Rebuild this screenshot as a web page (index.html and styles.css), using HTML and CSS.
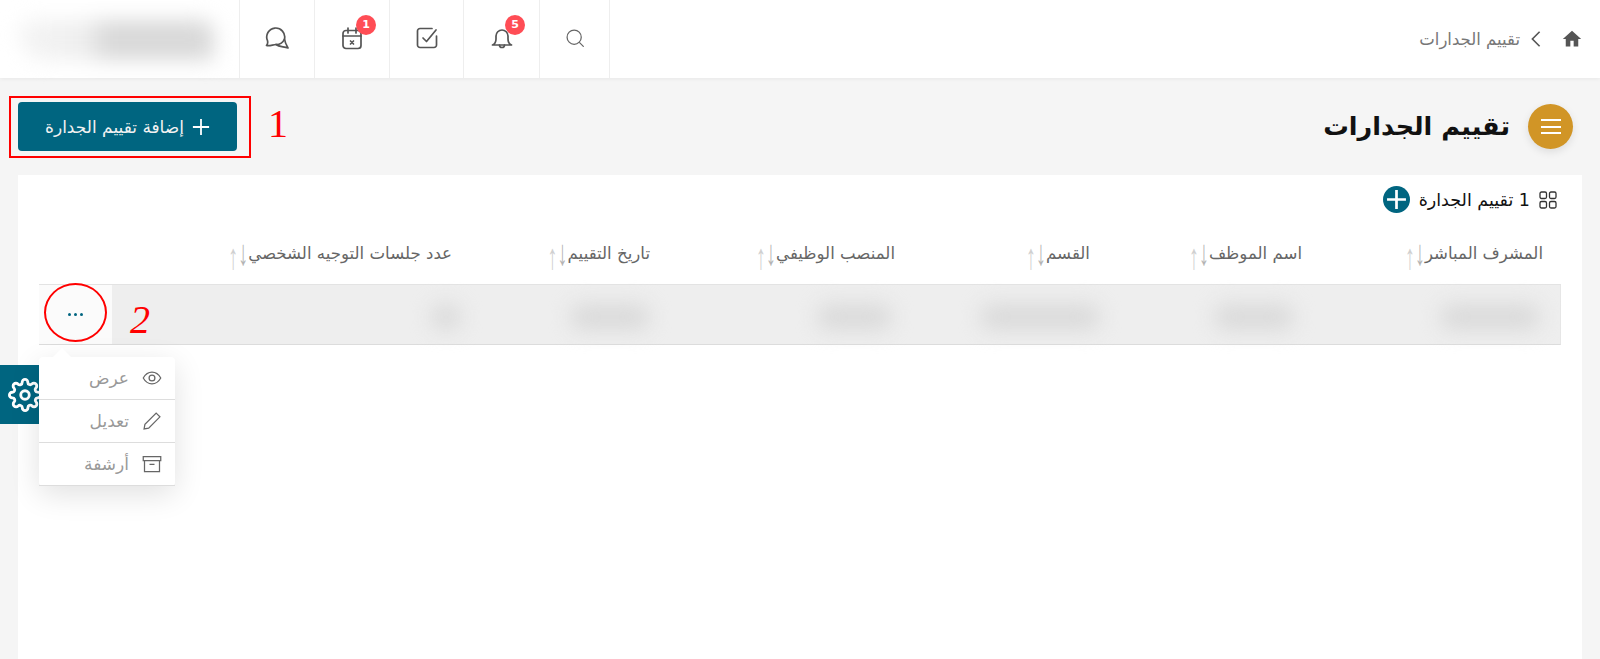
FILE: index.html
```html
<!DOCTYPE html>
<html lang="ar" dir="rtl">
<head>
  <meta charset="UTF-8">
  <meta name="viewport" content="width=device-width, initial-scale=1.0">
  <title>تقييم الجدارات</title>
  <link rel="stylesheet" href="styles.css">
</head>
<body>
  <header class="topbar">
    <nav class="crumbs">
      <svg class="home-icon" viewBox="0 0 24 24"><path d="M10 21v-7h4v7h5.500v-9H23L12 2 1 12h3.500v9z"/></svg>
      <svg class="crumb-sep" viewBox="0 0 12 20"><path d="M2 2l8 8-8 8"/></svg>
      <span class="crumb-text">تقييم الجدارات</span>
    </nav>
    <div class="tools">
      <div class="tool tool-search">
        <svg class="tool-icon" viewBox="0 0 24 24"><circle cx="11" cy="11" r="8.500"/><path d="M17.500 17.500L22 22"/></svg>
      </div>
      <div class="tool tool-wide">
        <svg class="tool-icon tool-icon-lg" viewBox="0 0 24 24"><path d="M2.500 19c2-.8 3.500-2.500 3.500-6v-3a6 6 0 0 1 12 0v3c0 3.500 1.500 5.200 3.500 6z"/><path d="M9.500 19a2.500 2.500 0 0 0 5 0"/></svg>
        <span class="badge">5</span>
      </div>
      <div class="tool tool-check">
        <svg class="tool-icon tool-icon-lg" viewBox="0 0 24 24"><path d="M21.500 10v9a2.500 2.500 0 0 1-2.500 2.500H5A2.500 2.500 0 0 1 2.500 19V5A2.500 2.500 0 0 1 5 2.500h12"/><path d="M8 12l3.500 3.500L21 4"/></svg>
      </div>
      <div class="tool">
        <svg class="tool-icon tool-icon-lg" viewBox="0 0 24 24"><rect x="3" y="4.500" width="18" height="18" rx="3"/><path d="M3 10h18M8 2v5M16 2v5M10.500 15l3 3M13.500 15l-3 3"/></svg>
        <span class="badge">1</span>
      </div>
      <div class="tool">
        <svg class="tool-icon tool-icon-lg" viewBox="0 0 24 24"><path d="M1.500 19.500c1.200-1.500 1.500-3 1-4.800A9 9 0 1 1 19.500 13a9 9 0 0 1-8.500 5.500c-3 0-6 1.800-9.500 1z"/><path d="M11 18.500c3 2.500 7.500 2 12 3.500-1.500-2.500-3-5-3.500-9"/></svg>
      </div>
    </div>
    <div class="user-blur"></div>
  </header>

  <main class="page">
    <div class="page-head">
      <div class="page-title">
        <span class="menu-btn"><i></i><i></i><i></i></span>
        <h1>تقييم الجدارات</h1>
      </div>
      <button class="add-btn">
        <svg class="add-icon" viewBox="0 0 20 20"><path d="M10 1v18M1 10h18"/></svg>
        إضافة تقييم الجدارة
      </button>
    </div>

    <section class="card">
      <div class="card-head">
        <svg class="grid-icon" viewBox="0 0 18 18">
          <rect x="1" y="1" width="6.500" height="6.500" rx="1.500"/>
          <rect x="10.500" y="1" width="6.500" height="6.500" rx="1.500"/>
          <rect x="1" y="10.500" width="6.500" height="6.500" rx="1.500"/>
          <rect x="10.500" y="10.500" width="6.500" height="6.500" rx="1.500"/>
        </svg>
        <span class="card-count">1 تقييم الجدارة</span>
        <span class="round-add"><svg viewBox="0 0 20 20"><path d="M10 3v14M3 10h14"/></svg></span>
      </div>

      <div class="cols col-names">
        <div class="col-name">المشرف المباشر<span class="sort-down">↓</span><span class="sort-up">↑</span></div>
        <div class="col-name">اسم الموظف<span class="sort-down">↓</span><span class="sort-up">↑</span></div>
        <div class="col-name">القسم<span class="sort-down">↓</span><span class="sort-up">↑</span></div>
        <div class="col-name">المنصب الوظيفي<span class="sort-down">↓</span><span class="sort-up">↑</span></div>
        <div class="col-name">تاريخ التقييم<span class="sort-down">↓</span><span class="sort-up">↑</span></div>
        <div class="col-name">عدد جلسات التوجيه الشخصي<span class="sort-down">↓</span><span class="sort-up">↑</span></div>
      </div>

      <div class="cols data-row">
        <div class="cell"><span class="smudge smudge-a"></span></div>
        <div class="cell"><span class="smudge smudge-b"></span></div>
        <div class="cell"><span class="smudge smudge-c"></span></div>
        <div class="cell"><span class="smudge smudge-d"></span></div>
        <div class="cell"><span class="smudge smudge-e"></span></div>
        <div class="cell cell-last">
          <span class="smudge smudge-f"></span>
          <span class="actions"><i></i><i></i><i></i></span>
        </div>
      </div>
    </section>
  </main>

  <div class="settings-tab">
    <svg viewBox="0 0 24 24"><circle cx="12" cy="12" r="3"/><path d="M19.400 15a1.650 1.650 0 0 0 .33 1.820l.06.06a2 2 0 0 1 0 2.830 2 2 0 0 1-2.830 0l-.06-.06a1.650 1.650 0 0 0-1.820-.33 1.650 1.650 0 0 0-1 1.510V21a2 2 0 0 1-2 2 2 2 0 0 1-2-2v-.09A1.650 1.650 0 0 0 9 19.400a1.650 1.650 0 0 0-1.820.33l-.06.06a2 2 0 0 1-2.830 0 2 2 0 0 1 0-2.830l.06-.06a1.650 1.650 0 0 0 .33-1.820 1.650 1.650 0 0 0-1.510-1H3a2 2 0 0 1-2-2 2 2 0 0 1 2-2h.09A1.650 1.650 0 0 0 4.600 9a1.650 1.650 0 0 0-.33-1.820l-.06-.06a2 2 0 0 1 0-2.830 2 2 0 0 1 2.830 0l.06.06a1.650 1.650 0 0 0 1.820.33H9a1.650 1.650 0 0 0 1-1.510V3a2 2 0 0 1 2-2 2 2 0 0 1 2 2v.09a1.650 1.650 0 0 0 1 1.510 1.650 1.650 0 0 0 1.820-.33l.06-.06a2 2 0 0 1 2.830 0 2 2 0 0 1 0 2.830l-.06.06a1.650 1.650 0 0 0-.33 1.820V9a1.650 1.650 0 0 0 1.510 1H21a2 2 0 0 1 2 2 2 2 0 0 1-2 2h-.09a1.650 1.650 0 0 0-1.510 1z"/></svg>
  </div>

  <div class="menu">
    <span class="menu-notch"></span>
    <div class="menu-item">
      <svg viewBox="0 0 24 24"><path d="M1.500 12C4 7.500 7.500 5 12 5s8 2.500 10.500 7c-2.500 4.500-6 7-10.500 7s-8-2.500-10.500-7z"/><circle cx="12" cy="12" r="3.500"/></svg>
      <span>عرض</span>
    </div>
    <div class="menu-item">
      <svg viewBox="0 0 24 24"><path d="M17 2.500l4.500 4.500L8 20.500l-5.500 1 1-5.500z"/></svg>
      <span>تعديل</span>
    </div>
    <div class="menu-item">
      <svg viewBox="0 0 24 24"><path d="M1.500 3h21v5h-21zM3 8v13h18V8M9 12.500h6"/></svg>
      <span>أرشفة</span>
    </div>
  </div>

  <span class="mark-box"></span>
  <span class="mark-num mark-one">1</span>
  <span class="mark-circle"></span>
  <span class="mark-num mark-two">2</span>
</body>
</html>
```

FILE: styles.css
```css
* {
  box-sizing: border-box;
}
html, body {
  height: 100%;
}
body {
  margin: 0;
  position: relative;
  overflow: hidden;
  display: flex;
  flex-direction: column;
  background: #f5f5f5;
  color: #222;
  font-family: "DejaVu Sans", "Noto Sans", sans-serif;
  font-size: 16px;
}

/* top bar */
.topbar {
  flex: none;
  height: 78px;
  display: flex;
  align-items: stretch;
  padding-right: 18px;
  background: #fff;
  box-shadow: 0 1px 4px rgba(0, 0, 0, 0.06);
}
.crumbs {
  display: flex;
  align-items: center;
  gap: 10px;
  color: #777;
}
.home-icon {
  width: 20px;
  height: 20px;
  fill: #555;
}
.crumb-sep {
  width: 12px;
  height: 18px;
  margin-right: 10px;
  fill: none;
  stroke: #555;
  stroke-width: 1.800;
  transform: scaleX(-1);
}
.crumb-text {
  font-size: 16.500px;
}
.tools {
  display: flex;
  margin-right: auto;
  border-left: 1px solid #eee;
}
.tool {
  position: relative;
  width: 75px;
  display: flex;
  align-items: center;
  justify-content: center;
  padding-bottom: 3px;
  border-right: 1px solid #eee;
}
.tool-search {
  width: 70px;
}
.tool-check {
  width: 74px;
}
.tool-wide {
  width: 76px;
}
.tool-icon {
  width: 20px;
  height: 20px;
  fill: none;
  stroke: #666;
  stroke-width: 1.500;
  stroke-linecap: round;
  stroke-linejoin: round;
}
.tool-icon-lg {
  width: 24px;
  height: 24px;
  stroke: #555;
  stroke-width: 1.700;
}
.badge {
  position: absolute;
  top: 15px;
  left: 41px;
  width: 20px;
  height: 20px;
  border-radius: 50%;
  background: #ff4d55;
  color: #fff;
  font-size: 11px;
  font-weight: 700;
  line-height: 20px;
  text-align: center;
}
.user-blur {
  width: 195px;
  height: 40px;
  margin: 20px 25px 0 19px;
  border-radius: 30px 30px 10px 60px;
  background: linear-gradient(to left, #d9d9d9 55%, #efefef 66%, #f4f4f4);
  filter: blur(10px);
}

/* page */
.page {
  flex: 1;
  min-height: 0;
  display: flex;
  flex-direction: column;
  padding: 0 18px;
}
.page-head {
  flex: none;
  height: 97px;
  display: flex;
  align-items: center;
  justify-content: space-between;
}
.page-title {
  display: flex;
  align-items: center;
  gap: 18px;
  padding-right: 9px;
}
.page-title h1 {
  margin: 0 0 2px;
  color: #111;
  font-size: 25.500px;
  font-weight: 700;
}
.menu-btn {
  width: 45px;
  height: 45px;
  display: flex;
  flex-direction: column;
  align-items: center;
  justify-content: center;
  gap: 4.500px;
  border-radius: 50%;
  background: #d19526;
  box-shadow: 0 3px 8px rgba(0, 0, 0, 0.1);
}
.menu-btn i {
  width: 20px;
  height: 2px;
  background: #fff;
}
.add-btn {
  width: 219px;
  height: 49px;
  display: flex;
  align-items: center;
  justify-content: center;
  gap: 8px;
  border: none;
  border-radius: 4px;
  background: #006580;
  color: #f2f2f2;
  font-family: inherit;
  font-size: 17px;
}
.add-icon {
  width: 18px;
  height: 18px;
  fill: none;
  stroke: #fff;
  stroke-width: 2;
}

/* card */
.card {
  flex: 1;
  padding: 11px 21px 0;
  background: #fff;
}
.card-head {
  height: 27px;
  display: flex;
  align-items: center;
  gap: 9px;
  padding-right: 4px;
}
.grid-icon {
  width: 18px;
  height: 18px;
  fill: none;
  stroke: #333;
  stroke-width: 1.300;
}
.card-count {
  color: #111;
  font-size: 17.500px;
}
.round-add {
  width: 27px;
  height: 27px;
  display: flex;
  border-radius: 50%;
  background: #006580;
}
.round-add svg {
  fill: none;
  stroke: #fff;
  stroke-width: 2;
}
.cols {
  display: grid;
  grid-template-columns: 241px 212px 195px 245px 198px 1fr;
}
.col-names {
  height: 71px;
  padding-bottom: 20px;
  align-items: end;
}
.col-name {
  display: flex;
  align-items: center;
  padding-right: 18px;
  color: #666;
  font-size: 16.600px;
  line-height: 20px;
  white-space: nowrap;
}
.sort-down,
.sort-up {
  flex: none;
  font-family: "Liberation Sans", sans-serif;
  font-size: 20px;
  line-height: 20px;
}
.sort-down {
  color: #b4b4b4;
  transform: translateY(-2px) scaleY(1.800);
}
.sort-up {
  color: #d0d0d0;
  transform: translateY(2px) scaleY(1.800);
}
.data-row {
  height: 61px;
  border-top: 1px solid #e3e3e3;
  border-bottom: 1px solid #dcdcdc;
  border-right: 1px solid #e6e6e6;
  background: #eee;
}
.cell {
  display: flex;
  align-items: center;
}
.cell-last {
  justify-content: space-between;
}
.smudge {
  height: 26px;
  margin-top: 4px;
  border-radius: 13px;
  background: #dadada;
  filter: blur(10px);
}
.smudge-a {
  width: 100px;
  margin-right: 20px;
}
.smudge-b {
  width: 80px;
  margin-right: 25px;
}
.smudge-c {
  width: 120px;
  margin-right: 7px;
}
.smudge-d {
  width: 75px;
  margin-right: 20px;
}
.smudge-e {
  width: 80px;
  margin-right: 17px;
}
.smudge-f {
  width: 30px;
  margin-right: 8px;
}
.actions {
  align-self: stretch;
  width: 73px;
  display: flex;
  align-items: center;
  justify-content: center;
  gap: 3px;
  background: #fbfbfb;
}
.actions i {
  width: 3px;
  height: 3px;
  border-radius: 50%;
  background: #006580;
}

/* floating things */
.settings-tab {
  position: absolute;
  left: 0;
  top: 365px;
  width: 39px;
  height: 59px;
  display: flex;
  align-items: center;
  background: #006580;
}
.settings-tab svg {
  flex: none;
  width: 34px;
  height: 34px;
  margin-right: -3px;
  fill: none;
  stroke: #fff;
  stroke-width: 2;
}
.menu {
  position: absolute;
  left: 39px;
  top: 357px;
  width: 136px;
  background: #fff;
  border-radius: 4px;
  box-shadow: 0 8px 30px rgba(0, 0, 0, 0.12);
}
.menu-notch {
  position: absolute;
  left: 13px;
  top: -9px;
  border: 10px solid transparent;
  border-top: none;
  border-bottom-color: #fff;
}
.menu-item {
  height: 43px;
  display: flex;
  align-items: center;
  gap: 13px;
  padding-right: 13px;
  border-bottom: 1px solid #ddd;
  color: #999;
  font-size: 17px;
}
.menu-item svg {
  flex: none;
  width: 20px;
  height: 20px;
  fill: none;
  stroke: #666;
  stroke-width: 1.500;
}

/* annotations drawn over the screenshot */
.mark-box {
  position: absolute;
  left: 9px;
  top: 96px;
  width: 242px;
  height: 62px;
  border: 2px solid #f00;
}
.mark-circle {
  position: absolute;
  left: 44px;
  top: 283px;
  width: 63px;
  height: 59px;
  border: 2px solid #f00;
  border-radius: 50%;
}
.mark-num {
  position: absolute;
  color: #f00;
  font-family: "Liberation Serif", serif;
  line-height: 1;
}
.mark-one {
  left: 268px;
  top: 104px;
  font-size: 40px;
}
.mark-two {
  left: 130px;
  top: 300px;
  font-size: 40px;
  font-style: italic;
}
```
